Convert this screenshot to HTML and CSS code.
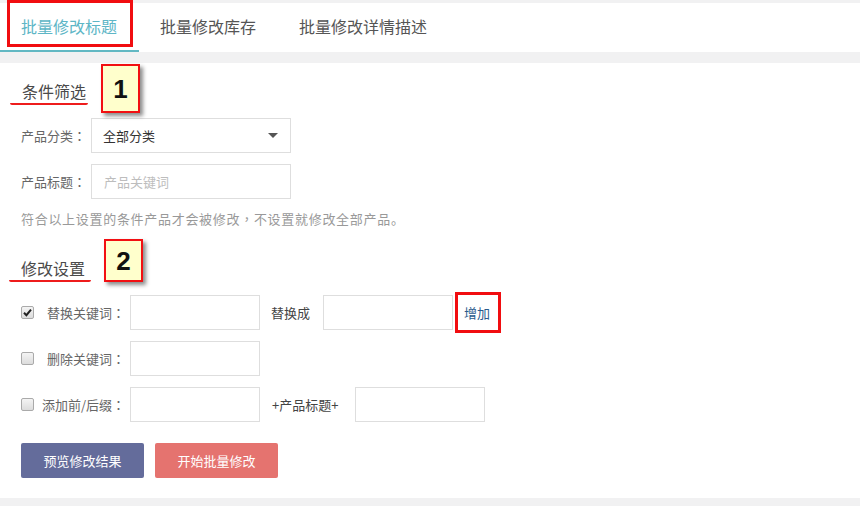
FILE: index.html
```html
<!DOCTYPE html>
<html lang="zh-CN">
<head>
<meta charset="utf-8">
<title>批量修改</title>
<link rel="stylesheet" href="styles.css">
</head>
<body>
<div class="tabs">
  <div class="tab active">批量修改标题<span class="mark-box tab-mark"></span></div>
  <div class="tab">批量修改库存</div>
  <div class="tab">批量修改详情描述</div>
</div>
<div class="panel">
  <div class="section-title"><span class="title-text">条件筛选</span><span class="badge badge-1">1</span></div>
  <div class="field-row">
    <span class="field-label">产品分类<span class="colon" lang="zh-TW">：</span></span>
    <div class="select"><span>全部分类</span><span class="caret"></span></div>
  </div>
  <div class="field-row">
    <span class="field-label">产品标题<span class="colon" lang="zh-TW">：</span></span>
    <div class="text-input wide placeholder">产品关键词</div>
  </div>
  <p class="hint">符合以上设置的条件产品才会被修改<span class="colon" lang="zh-TW">，</span>不设置就修改全部产品。</p>

  <div class="section-title second"><span class="title-text t2">修改设置</span><span class="badge badge-2">2</span></div>
  <div class="opt-row">
    <label class="opt-label"><span class="cb checked"><svg viewBox="0 0 13 13" width="13" height="13"><path d="M3 6.8 L5.4 9.2 L10 3.6" fill="none" stroke="#222" stroke-width="2"/></svg></span><span class="opt-text">替换关键词<span class="colon" lang="zh-TW">：</span></span></label>
    <div class="text-input"></div>
    <span class="mid-text">替换成</span>
    <div class="text-input mid-input"></div>
    <a class="add-link">增加</a>
  </div>
  <div class="opt-row">
    <label class="opt-label"><span class="cb"></span><span class="opt-text">删除关键词<span class="colon" lang="zh-TW">：</span></span></label>
    <div class="text-input"></div>
  </div>
  <div class="opt-row">
    <label class="opt-label"><span class="cb"></span><span class="opt-text">添加前/后缀<span class="colon" lang="zh-TW">：</span></span></label>
    <div class="text-input"></div>
    <span class="mid-text plus">+产品标题+</span>
    <div class="text-input"></div>
  </div>
  <div class="btn-row">
    <button class="btn btn-preview">预览修改结果</button>
    <button class="btn btn-start">开始批量修改</button>
  </div>
</div>
</body>
</html>
```

FILE: styles.css
```css
* { box-sizing: border-box; }
html, body { margin: 0; padding: 0; }
body {
  background: #f1f1f2;
  font-family: "Noto Sans CJK SC", "Liberation Sans", sans-serif;
  color: #555;
  width: 860px;
  height: 506px;
  overflow: hidden;
  padding-top: 3px;
}
.colon { font-family: "Noto Sans CJK TC", "Noto Sans CJK SC", sans-serif; }
.tabs {
  background: #fff;
  height: 49px;
  display: flex;
  align-items: stretch;
}
.tab {
  position: relative;
  padding: 0 22px 0 21px;
  font-size: 16px;
  line-height: 47px;
  color: #555;
  border-bottom: 2px solid transparent;
}
.tab.active {
  color: #5db6c6;
  border-bottom-color: #62b8c3;
}
.mark-box {
  position: absolute;
  border: 3px solid #f10d10;
}
.tab-mark {
  left: 7px;
  top: -3px;
  width: 126px;
  height: 47px;
}
.panel {
  margin-top: 11px;
  background: #fff;
  height: 435px;
  padding: 18px 0 0 21px;
}
.section-title {
  position: relative;
  height: 24px;
  font-size: 16px;
  line-height: 20px;
  color: #4a4a4a;
}
.section-title.second { margin-top: 29px; }
.title-text {
  display: inline-block;
  margin-left: -11px;
  padding: 0 2px 2px 12px;
  border-bottom: 2px solid #ee1c1c;
  border-radius: 2px;
}
.title-text.t2 { margin-left: -12px; padding-right: 6px; }
.badge {
  position: absolute;
  width: 39px;
  background: #ffffcc;
  border: 2px solid #f20f12;
  box-shadow: 3px 3px 4px rgba(0,0,0,.45);
  font-family: "Liberation Sans", Arial, sans-serif;
  font-weight: bold;
  font-size: 26px;
  color: #111;
  display: flex;
  align-items: center;
  justify-content: center;
}
.badge-1 { left: 80px; top: -17px; height: 49px; }
.badge-2 { left: 83px; top: -19px; height: 43px; }
.field-row {
  display: flex;
  align-items: center;
  margin-top: 13px;
  height: 35px;
}
.field-row + .field-row { margin-top: 11px; }
.field-label {
  width: 70px;
  font-size: 13px;
  color: #666;
}
.select, .text-input {
  height: 35px;
  border: 1px solid #dedede;
  background: #fff;
}
.select {
  width: 200px;
  display: flex;
  align-items: center;
  justify-content: space-between;
  padding: 0 12px 0 11px;
  font-size: 13px;
  color: #333;
}
.caret {
  width: 0; height: 0;
  border-left: 5px solid transparent;
  border-right: 5px solid transparent;
  border-top: 5px solid #555;
}
.text-input { width: 130px; }
.text-input.wide {
  width: 200px;
  padding-left: 12px;
  font-size: 13px;
  line-height: 33px;
}
.placeholder { color: #bdbdbd; }
.hint {
  margin: 10px 0 0;
  font-size: 13px;
  line-height: 20px;
  color: #999;
  letter-spacing: 0.7px;
}
.opt-row {
  display: flex;
  align-items: center;
  height: 35px;
  margin-top: 11px;
}
.section-title + .opt-row { margin-top: 13px; }
.opt-label {
  width: 109px;
  display: flex;
  align-items: center;
  justify-content: space-between;
  padding-right: 5px;
  font-size: 13px;
  color: #666;
}
.cb {
  width: 13px;
  height: 13px;
  border: 1px solid #aaa;
  border-radius: 2px;
  background: linear-gradient(#f4f4f4, #dcdcdc);
  display: inline-flex;
}
.cb svg { margin: -1px; }
.mid-text {
  font-size: 13px;
  color: #444;
  margin: 0 13px 0 11px;
}
.mid-text.plus { margin: 0 17px 0 12px; }
.add-link {
  display: inline-flex;
  align-items: center;
  height: 41px;
  margin-left: 2px;
  padding: 0 8px 0 6px;
  border: 3px solid #f10d10;
  font-size: 13px;
  color: #2a5b8c;
  cursor: pointer;
}
.btn-row {
  display: flex;
  gap: 11px;
  margin-top: 21px;
}
.btn {
  width: 123px;
  height: 35px;
  border: 0;
  border-radius: 2px;
  color: #fff;
  font-family: "Noto Sans CJK SC", "Liberation Sans", sans-serif;
  font-size: 13px;
  padding: 0;
}
.btn-preview { background: #646c9b; }
.btn-start { background: #e5736f; }
```
